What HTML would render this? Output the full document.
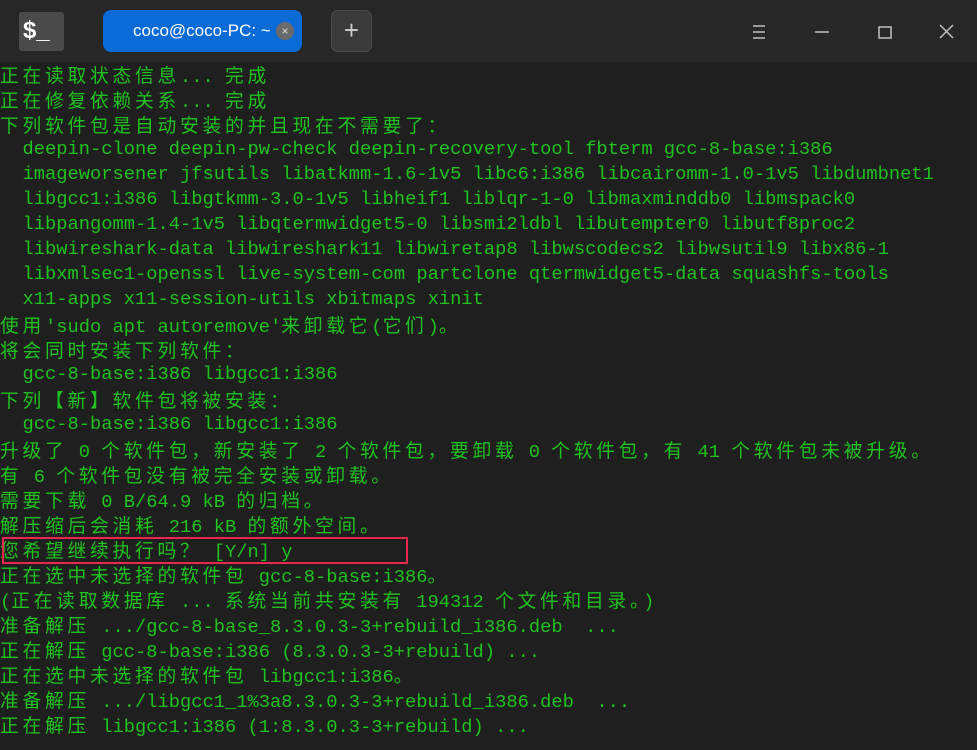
<!DOCTYPE html>
<html><head><meta charset="utf-8"><style>
body{margin:0;width:977px;height:750px;background:#1f1f1f;overflow:hidden;position:relative;font-family:"Liberation Mono","Noto Sans CJK SC",monospace}
#hd{position:absolute;left:0;top:0;width:977px;height:62px;background:#272727}
#logo{position:absolute;left:19px;top:12px;width:45px;height:39px;background:#4a4a4a;border-radius:3px;color:#fff;font:bold 24px "Liberation Sans",sans-serif;line-height:38px;text-indent:4px}
#tab{position:absolute;left:103px;top:10px;width:199px;height:42px;background:#0a6bd6;border-radius:8px;color:#fff;font:17px "Liberation Sans",sans-serif;line-height:42px;box-sizing:border-box;padding-left:30px}
#x{position:absolute;left:276px;top:22px;width:18px;height:18px;border-radius:50%;background:#6a6a6a;color:#ddd;font:12px sans-serif;line-height:18px;text-align:center}
#plus{position:absolute;left:331px;top:10px;width:41px;height:42px;background:#3a3a3a;border:1px solid #4a4a4a;box-sizing:border-box;border-radius:7px;color:#ccc;font:26px "Liberation Sans";line-height:38px;text-align:center}
#t{position:absolute;left:0;top:62px;font-size:18.75px;color:#1fc21f}
#t div{height:25px;line-height:25px;white-space:pre;overflow:visible}
.c{font-family:"Noto Sans CJK SC",sans-serif;letter-spacing:3.75px;line-height:25px}
#box{position:absolute;left:2px;top:537px;width:402px;height:23px;border:2px solid #e8284e}
</style></head><body>
<div id="hd">
<div id="logo">$_</div>
<div id="tab">coco@coco-PC: ~</div><div id="x">×</div>
<div id="plus">+</div>
<svg width="977" height="62" style="position:absolute;left:0;top:0" stroke="#bfbfc6" stroke-width="1.5" fill="none">
<path d="M753 26h12M753 32h12M753 38h12"/><path d="M815 32h14"/><rect x="879" y="27" width="12" height="11"/><path d="M940 25l13 13M953 25l-13 13"/></svg>
</div>
<div id="t">
<div><span class="c">正在读取状态信息</span>... <span class="c">完成</span></div>
<div><span class="c">正在修复依赖关系</span>... <span class="c">完成</span></div>
<div><span class="c">下列软件包是自动安装的并且现在不需要了：</span></div>
<div>  deepin-clone deepin-pw-check deepin-recovery-tool fbterm gcc-8-base:i386</div>
<div>  imageworsener jfsutils libatkmm-1.6-1v5 libc6:i386 libcairomm-1.0-1v5 libdumbnet1</div>
<div>  libgcc1:i386 libgtkmm-3.0-1v5 libheif1 liblqr-1-0 libmaxminddb0 libmspack0</div>
<div>  libpangomm-1.4-1v5 libqtermwidget5-0 libsmi2ldbl libutempter0 libutf8proc2</div>
<div>  libwireshark-data libwireshark11 libwiretap8 libwscodecs2 libwsutil9 libx86-1</div>
<div>  libxmlsec1-openssl live-system-com partclone qtermwidget5-data squashfs-tools</div>
<div>  x11-apps x11-session-utils xbitmaps xinit</div>
<div><span class="c">使用</span>'sudo apt autoremove'<span class="c">来卸载它</span>(<span class="c">它们</span>)<span class="c">。</span></div>
<div><span class="c">将会同时安装下列软件：</span></div>
<div>  gcc-8-base:i386 libgcc1:i386</div>
<div><span class="c">下列【新】软件包将被安装：</span></div>
<div>  gcc-8-base:i386 libgcc1:i386</div>
<div><span class="c">升级了</span> 0 <span class="c">个软件包，新安装了</span> 2 <span class="c">个软件包，要卸载</span> 0 <span class="c">个软件包，有</span> 41 <span class="c">个软件包未被升级。</span></div>
<div><span class="c">有</span> 6 <span class="c">个软件包没有被完全安装或卸载。</span></div>
<div><span class="c">需要下载</span> 0 B/64.9 kB <span class="c">的归档。</span></div>
<div><span class="c">解压缩后会消耗</span> 216 kB <span class="c">的额外空间。</span></div>
<div><span class="c">您希望继续执行吗？</span> [Y/n] y</div>
<div><span class="c">正在选中未选择的软件包</span> gcc-8-base:i386<span class="c">。</span></div>
<div>(<span class="c">正在读取数据库</span> ... <span class="c">系统当前共安装有</span> 194312 <span class="c">个文件和目录。</span>)</div>
<div><span class="c">准备解压</span> .../gcc-8-base_8.3.0.3-3+rebuild_i386.deb  ...</div>
<div><span class="c">正在解压</span> gcc-8-base:i386 (8.3.0.3-3+rebuild) ...</div>
<div><span class="c">正在选中未选择的软件包</span> libgcc1:i386<span class="c">。</span></div>
<div><span class="c">准备解压</span> .../libgcc1_1%3a8.3.0.3-3+rebuild_i386.deb  ...</div>
<div><span class="c">正在解压</span> libgcc1:i386 (1:8.3.0.3-3+rebuild) ...</div>
</div>
<div id="box"></div>
</body></html>
